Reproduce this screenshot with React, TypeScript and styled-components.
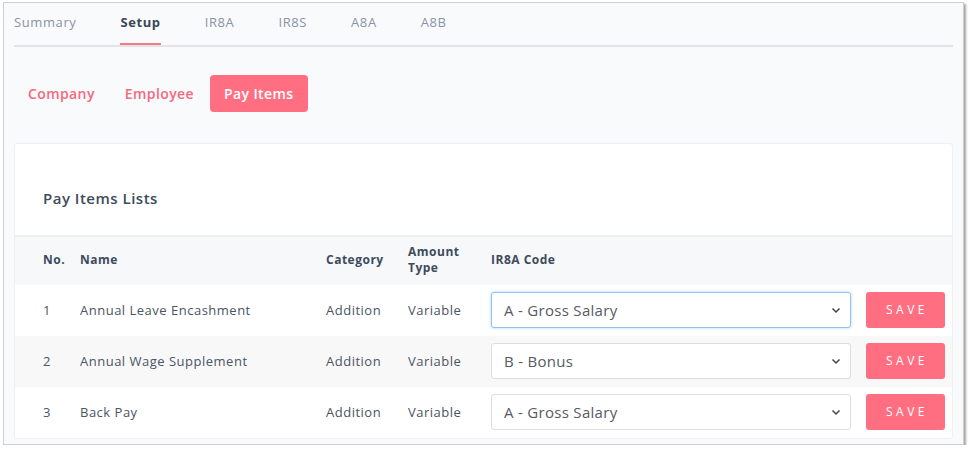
import React from 'react'
import styled, { createGlobalStyle } from 'styled-components'

const GlobalStyle = createGlobalStyle`
  body {
    margin: 0;
    background: #ffffff;
    font-family: "Open Sans", "Noto Sans", sans-serif;
  }
`

const tabs = ['Summary', 'Setup', 'IR8A', 'IR8S', 'A8A', 'A8B']

const items = [
  { no: 1, name: 'Annual Leave Encashment', code: 'A - Gross Salary', focused: true },
  { no: 2, name: 'Annual Wage Supplement', code: 'B - Bonus', focused: false },
  { no: 3, name: 'Back Pay', code: 'A - Gross Salary', focused: false },
]

export default function App() {
  return (
    <>
      <GlobalStyle />
      <Frame>
        <Tabs>
          {tabs.map((t) => (
            <Tab key={t} $active={t === 'Setup'}>{t}</Tab>
          ))}
        </Tabs>

        <SubNav>
          <SubTab>Company</SubTab>
          <SubTab>Employee</SubTab>
          <SubTab $active>Pay Items</SubTab>
        </SubNav>

        <Card>
          <CardTitle>Pay Items Lists</CardTitle>
          <Table>
            <thead>
              <tr>
                <Th style={{ width: 37 }}>No.</Th>
                <Th style={{ width: 246 }}>Name</Th>
                <Th style={{ width: 82 }}>Category</Th>
                <Th style={{ width: 83 }}>Amount<br />Type</Th>
                <Th>IR8A Code</Th>
                <Th style={{ width: 101 }}></Th>
              </tr>
            </thead>
            <tbody>
              {items.map((it) => (
                <Row key={it.no}>
                  <Td>{it.no}</Td>
                  <Td>{it.name}</Td>
                  <Td>Addition</Td>
                  <Td>Variable</Td>
                  <Td>
                    <SelectBox $focused={it.focused}>
                      <span>{it.code}</span>
                      <svg width="12" height="12" viewBox="0 0 12 12">
                        <path d="M2.5 4.5 L6 8 L9.5 4.5" fill="none" stroke="#444" strokeWidth="1.5" />
                      </svg>
                    </SelectBox>
                  </Td>
                  <Td>
                    <SaveButton>SAVE</SaveButton>
                  </Td>
                </Row>
              ))}
            </tbody>
          </Table>
        </Card>
      </Frame>
    </>
  )
}

const Frame = styled.div`
  margin: 2px 0 0 3px;
  width: 961px;
  height: 443px;
  box-sizing: border-box;
  border: 1px solid #cfcfd2;
  box-shadow: 2px 2px 2px rgba(0, 0, 0, 0.35);
  background: #f9fafc;
  padding: 0 10px;
  overflow: hidden;
`

const Tabs = styled.div`
  display: flex;
  border-bottom: 2px solid #e3e4e8;
  height: 44px;
  box-sizing: border-box;
`

const Tab = styled.div<{ $active?: boolean }>`
  font-size: 13px;
  letter-spacing: 0.6px;
  line-height: 38px;
  height: 42px;
  box-sizing: border-box;
  margin-right: 44px;
  margin-bottom: -2px;
  color: ${(p) => (p.$active ? '#3b4756' : '#8a93a3')};
  font-weight: ${(p) => (p.$active ? 700 : 400)};
  border-bottom: 2px solid ${(p) => (p.$active ? '#f47b82' : 'transparent')};
`

const SubNav = styled.div`
  display: flex;
  align-items: center;
  gap: 2px;
  padding-top: 28px;
  height: 37px;
`

const SubTab = styled.div<{ $active?: boolean }>`
  height: 37px;
  line-height: 37px;
  padding: 0 14px;
  border-radius: 4px;
  font-size: 14px;
  font-weight: 600;
  letter-spacing: 0.4px;
  color: ${(p) => (p.$active ? '#ffffff' : '#f4697c')};
  background: ${(p) => (p.$active ? '#ff6f81' : 'transparent')};
`

const Card = styled.div`
  margin-top: 31px;
  background: #ffffff;
  border: 1px solid #eef0f3;
  border-radius: 3px;
`

const CardTitle = styled.div`
  padding: 44px 28px 0;
  height: 47px;
  font-size: 15px;
  font-weight: 600;
  letter-spacing: 0.5px;
  color: #3d4b5c;
`

const Table = styled.table`
  width: 100%;
  border-collapse: collapse;
  table-layout: fixed;
  thead tr {
    background: #f7f8fa;
    border-top: 2px solid #eeeff2;
    height: 49px;
  }
`

const Th = styled.th`
  text-align: left;
  font-size: 12px;
  font-weight: 700;
  letter-spacing: 0.5px;
  line-height: 16px;
  color: #3d4b5c;
  padding: 0 0 3px 0;
  vertical-align: middle;
  &:first-child {
    padding-left: 28px;
  }
`

const Row = styled.tr`
  height: 51px;
  &:nth-child(even) {
    background: #f8f8f9;
  }
`

const Td = styled.td`
  font-size: 13px;
  letter-spacing: 0.5px;
  color: #4a5462;
  padding: 0 0 2px 0;
  vertical-align: middle;
  &:first-child {
    padding-left: 28px;
  }
  &:last-child {
    padding-left: 15px;
  }
`

const SelectBox = styled.div<{ $focused?: boolean }>`
  display: flex;
  align-items: center;
  justify-content: space-between;
  height: 36px;
  box-sizing: border-box;
  width: 360px;
  padding: 0 8px 0 12px;
  background: #ffffff;
  border: 1px solid ${(p) => (p.$focused ? '#8cc4ef' : '#dcdde0')};
  box-shadow: ${(p) => (p.$focused ? '0 0 3px rgba(100, 170, 240, 0.5)' : 'none')};
  border-radius: 3px;
  font-size: 15px;
  letter-spacing: 0.3px;
  color: #555b63;
`

const SaveButton = styled.button`
  width: 79px;
  height: 36px;
  border: none;
  border-radius: 3px;
  background: #ff6f81;
  color: #ffffff;
  font-family: "Open Sans", sans-serif;
  font-size: 12px;
  letter-spacing: 3.5px;
  padding: 0 0 0 3px;
`
